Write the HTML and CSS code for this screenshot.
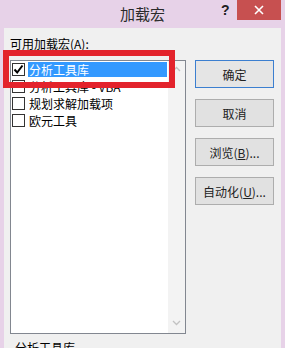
FILE: index.html
```html
<!DOCTYPE html>
<html lang="zh">
<head>
<meta charset="utf-8">
<title>加载宏</title>
<link rel="stylesheet" href="styles.css">
</head>
<body>
<div class="window">
  <div class="titlebar">
    <div class="title">加载宏</div>
    <div class="help"><span class="q">&#63;</span></div>
    <div class="close">
      <svg width="10" height="10" viewBox="0 0 10 10"><path d="M1 1 L9 9 M9 1 L1 9" stroke="#fff" stroke-width="1.6"/></svg>
    </div>
  </div>
  <div class="client">
    <div class="label">可用加载宏(A):</div>
    <div class="main">
      <div class="listbox">
        <div class="items">
          <div class="item">
            <span class="check checked">
              <svg width="11" height="11" viewBox="0 0 11 11"><path d="M1.5 5.5 L4.2 8.5 L9.5 1.5" fill="none" stroke="#000" stroke-width="2"/></svg>
            </span>
            <span class="text selected">分析工具库</span>
          </div>
          <div class="item">
            <span class="check"></span>
            <span class="text">分析工具库 - VBA</span>
          </div>
          <div class="item">
            <span class="check"></span>
            <span class="text">规划求解加载项</span>
          </div>
          <div class="item">
            <span class="check"></span>
            <span class="text">欧元工具</span>
          </div>
        </div>
        <div class="scrollbar">
          <svg width="9" height="6" viewBox="0 0 9 6"><path d="M1 5 L4.5 1.5 L8 5" fill="none" stroke="#c2c2c2" stroke-width="1.3"/></svg>
          <svg width="9" height="6" viewBox="0 0 9 6"><path d="M1 1 L4.5 4.5 L8 1" fill="none" stroke="#c2c2c2" stroke-width="1.3"/></svg>
        </div>
      </div>
      <div class="buttons">
        <div class="btn default">确定</div>
        <div class="btn">取消</div>
        <div class="btn">浏览(<u>B</u>)...</div>
        <div class="btn">自动化(<u>U</u>)...</div>
      </div>
    </div>
    <div class="desc">分析工具库</div>
  </div>
  <div class="annotation"></div>
</div>
</body>
</html>
```

FILE: styles.css
```css
html, body {
  margin: 0;
  padding: 0;
}
body {
  width: 285px;
  height: 348px;
  overflow: hidden;
  background: #e7d2e8;
  font-family: "Noto Sans CJK SC", "Noto Sans", sans-serif;
  font-size: 12px;
  color: #000;
}
.window {
  position: relative;
  width: 285px;
  height: 348px;
  display: flex;
  flex-direction: column;
}
.titlebar {
  height: 28px;
  flex: none;
  display: flex;
  align-items: flex-start;
  padding-right: 4px;
}
.title {
  margin-left: 120px;
  margin-top: 4px;
  font-size: 15px;
  line-height: 20px;
  color: #2b2b2b;
  flex: 1;
}
.help {
  flex: none;
  width: 18px;
  height: 20px;
  display: flex;
  align-items: center;
}
.q {
  font-family: "Liberation Sans", Arial, sans-serif;
  font-weight: bold;
  font-size: 14px;
  line-height: 16px;
  color: #202020;
  padding-left: 2px;
}
.close {
  flex: none;
  width: 44px;
  height: 20px;
  background: #c75050;
  display: flex;
  align-items: center;
  justify-content: center;
}
.client {
  flex: 1;
  margin: 0 4px;
  background: #f0f0f0;
  padding: 9px 0 0 6px;
  display: flex;
  flex-direction: column;
}
.label {
  height: 14px;
  line-height: 14px;
  margin-bottom: 9px;
}
.main {
  display: flex;
  gap: 9px;
}
.listbox {
  width: 174px;
  height: 272px;
  border: 1px solid #828790;
  background: #fff;
  display: flex;
}
.items {
  flex: 1;
  padding-top: 1px;
}
.item {
  height: 17px;
  display: flex;
  align-items: flex-start;
}
.check {
  width: 11px;
  height: 11px;
  border: 1px solid #333;
  background: #fff;
  margin: 1px 3px 0 1px;
  flex: none;
  display: flex;
  align-items: center;
  justify-content: center;
}
.text {
  height: 15px;
  line-height: 15px;
  padding-left: 1px;
  white-space: nowrap;
}
.text.selected {
  flex: 1;
  background: #3399ff;
  color: #fff;
  margin-right: 1px;
}
.scrollbar {
  width: 17px;
  background: #f3f3f3;
  display: flex;
  flex-direction: column;
  justify-content: space-between;
  align-items: center;
  padding: 5px 0 7px;
  box-sizing: border-box;
}
.buttons {
  display: flex;
  flex-direction: column;
  gap: 11px;
}
.btn {
  width: 77px;
  height: 26px;
  border: 1px solid #adadad;
  background: #e1e1e1;
  display: flex;
  align-items: center;
  justify-content: center;
  color: #222;
}
.btn.default {
  border-color: #3c7fd0;
  background: #e5e5e5;
}
.btn u {
  text-decoration: underline;
}
.desc {
  margin-top: 7px;
  padding-left: 5px;
  line-height: 14px;
}
.annotation {
  position: absolute;
  left: 3px;
  top: 50px;
  width: 160px;
  height: 26px;
  border: 6px solid #e3232c;
}
```
